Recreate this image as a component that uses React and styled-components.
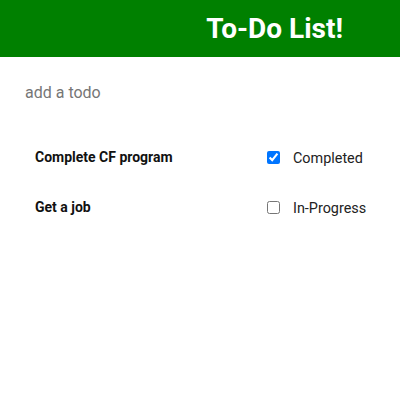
import React, { useState } from 'react';
import styled, { createGlobalStyle } from 'styled-components';

const GlobalStyle = createGlobalStyle`
  body {
    margin: 0;
    font-family: Roboto, "Liberation Sans", sans-serif;
    background: #fff;
  }
`;

const Header = styled.header`
  background-color: #008000;
  height: 57px;
  display: flex;
  align-items: center;
  justify-content: flex-end;
  padding-right: 57px;
`;

const Title = styled.h1`
  margin: 0;
  color: #fff;
  font-size: 28px;
  font-weight: 700;
`;

const TodoInput = styled.input`
  display: block;
  margin: 23px 0 0 25px;
  border: none;
  outline: none;
  padding: 0;
  font-family: Roboto, "Liberation Sans", sans-serif;
  font-size: 16px;
  height: 24px;
  width: 300px;
  &::placeholder {
    color: #767676;
  }
`;

const List = styled.div`
  margin-top: 42px;
  padding-left: 35px;
  display: flex;
  flex-direction: column;
  gap: 28px;
`;

const Row = styled.div`
  display: flex;
  align-items: center;
  height: 22px;
`;

const TaskName = styled.span`
  width: 228px;
  font-size: 14px;
  font-weight: 700;
  color: #111;
`;

const Status = styled.label`
  display: flex;
  align-items: center;
  font-size: 14.4px;
  color: #222;
  input {
    margin: 0 13px 0 4px;
    width: 13px;
    height: 13px;
  }
  span {
    padding-top: 3px;
  }
`;

const initial = [
  { id: 1, name: 'Complete CF program', done: true },
  { id: 2, name: 'Get a job', done: false },
];

const App = () => {
  const [todos, setTodos] = useState(initial);
  const toggle = (id) =>
    setTodos(todos.map(t => (t.id === id ? { ...t, done: !t.done } : t)));

  return (
    <>
      <GlobalStyle />
      <Header>
        <Title>To-Do List!</Title>
      </Header>
      <TodoInput placeholder="add a todo" />
      <List>
        {todos.map(t => (
          <Row key={t.id}>
            <TaskName>{t.name}</TaskName>
            <Status>
              <input type="checkbox" checked={t.done} onChange={() => toggle(t.id)} />
              <span>{t.done ? 'Completed' : 'In-Progress'}</span>
            </Status>
          </Row>
        ))}
      </List>
    </>
  );
};

export default App;
